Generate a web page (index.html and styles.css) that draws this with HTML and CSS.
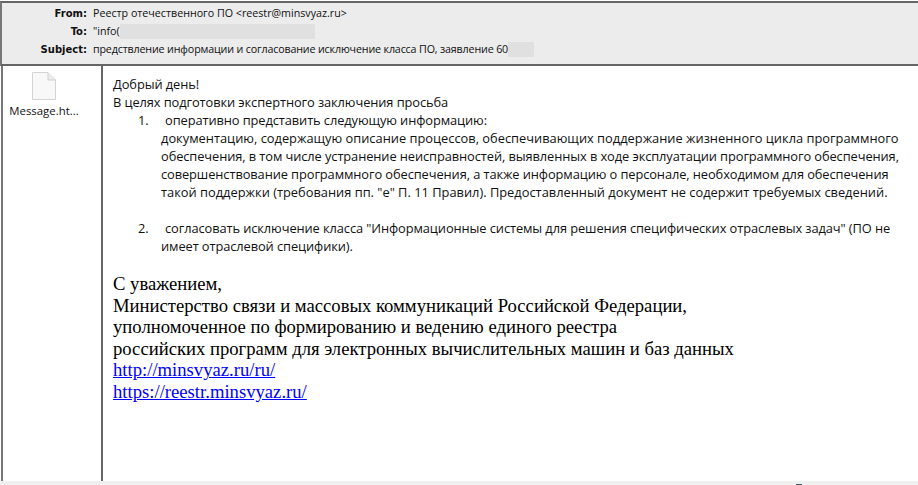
FILE: index.html
```html
<!DOCTYPE html>
<html lang="ru">
<head>
<meta charset="utf-8">
<title>Message</title>
<link rel="stylesheet" href="styles.css">
</head>
<body>
<div class="window">
  <header class="head">
    <div class="row"><span class="label">From:</span><span class="val val-from">Реестр отечественного ПО &lt;reestr@minsvyaz.ru&gt;</span></div>
    <div class="row"><span class="label">To:</span><span class="val">"info(<span class="mask mask-to"></span></span></div>
    <div class="row"><span class="label">Subject:</span><span class="val val-subj">предствление информации и согласование исключение класса ПО, заявление 60<span class="mask mask-subj"></span></span></div>
  </header>
  <main class="main">
    <aside class="side">
      <svg class="file" width="24" height="28" viewBox="0 0 24 28" aria-hidden="true">
        <path d="M.5.5H16L23.5 8V27.5H.5Z" fill="#f8f8f8" stroke="#d4d4d4"/>
        <path d="M16 .5V8H23.5" fill="#ececec" stroke="#d0d0d0"/>
      </svg>
      <div class="fname">Message.ht...</div>
    </aside>
    <section class="body">
      <p class="line">Добрый день!</p>
      <p class="line">В целях подготовки экспертного заключения просьба</p>
      <ol class="list">
        <li>оперативно представить следующую информацию:<br><span class="wide">документацию, содержащую описание процессов, обеспечивающих поддержание жизненного цикла программного</span><br>обеспечения, в том числе устранение неисправностей, выявленных в ходе эксплуатации программного обеспечения,<br>совершенствование программного обеспечения, а также информацию о персонале, необходимом для обеспечения<br><span class="wide">такой поддержки (требования пп. "е" П. 11 Правил). Предоставленный документ не содержит требуемых сведений.</span></li>
        <li>согласовать исключение класса "Информационные системы для решения специфических отраслевых задач" (ПО не<br>имеет отраслевой специфики).</li>
      </ol>
      <div class="sign">
        С уважением,<br>
        Министерство связи и массовых коммуникаций Российской Федерации,<br>
        уполномоченное по формированию и ведению единого реестра<br>
        российских программ для электронных вычислительных машин и баз данных<br>
        <a href="#">http://minsvyaz.ru/ru/</a><br>
        <a href="#">https://reestr.minsvyaz.ru/</a>
      </div>
    </section>
  </main>
  <footer class="foot"><span class="tick"></span></footer>
</div>
</body>
</html>
```
FILE: styles.css
```css
* { box-sizing: border-box; }
html, body { margin: 0; height: 100%; background: #fff; overflow: hidden; }
.window { height: 485px; display: flex; flex-direction: column; font-family: "Open Sans", sans-serif; color: #111; }
.head { margin-top: 1px; height: 65px; background: #ececec; border-top: 2px solid #666; border-bottom: 2px solid #666; border-left: 2px solid #777; padding-top: 1px; }
.row { display: flex; height: 18px; align-items: center; font-size: 10.7px; }
.label { width: 85px; text-align: right; font-weight: 700; font-family: "DejaVu Sans", sans-serif; font-size: 10px; }
.val { margin-left: 6px; white-space: nowrap; display: flex; align-items: center; }
.val-subj { letter-spacing: -0.15px; }
.mask { display: inline-block; background: #e0e0e0; height: 15px; }
.mask-to { width: 195px; }
.mask-subj { width: 26px; }
.main { flex: 1; display: flex; margin-left: 1px; border-left: 2px solid #777; min-height: 0; }
.side { width: 100px; border-right: 2px solid #666; padding-top: 6px; display: flex; flex-direction: column; align-items: center; flex-shrink: 0; padding-right: 16px; }
.fname { font-size: 11.4px; margin-top: 3px; white-space: nowrap; }
.body { padding: 9px 0 0 10px; font-size: 12.85px; line-height: 18px; letter-spacing: -0.09px; flex: 1; }
.wide { letter-spacing: 0; }
.line { margin: 0; }
.list { margin: 0; padding-left: 48px; list-style: none; counter-reset: item; }
.list li { position: relative; counter-increment: item; text-indent: 4px; margin-bottom: 18px; }
.list li::before { content: counter(item) "."; position: absolute; left: -23px; text-indent: 0; }
.sign { font-family: "Liberation Serif", serif; font-size: 18.67px; line-height: 21.6px; letter-spacing: 0; margin-top: 9px; color: #000; }
.sign a { color: #00f; }
.foot { position: relative; height: 4px; background: #f0f0f0; flex-shrink: 0; }
.tick { position: absolute; left: 796px; bottom: 0; width: 6px; height: 1px; background: #3a5a6a; }
```
